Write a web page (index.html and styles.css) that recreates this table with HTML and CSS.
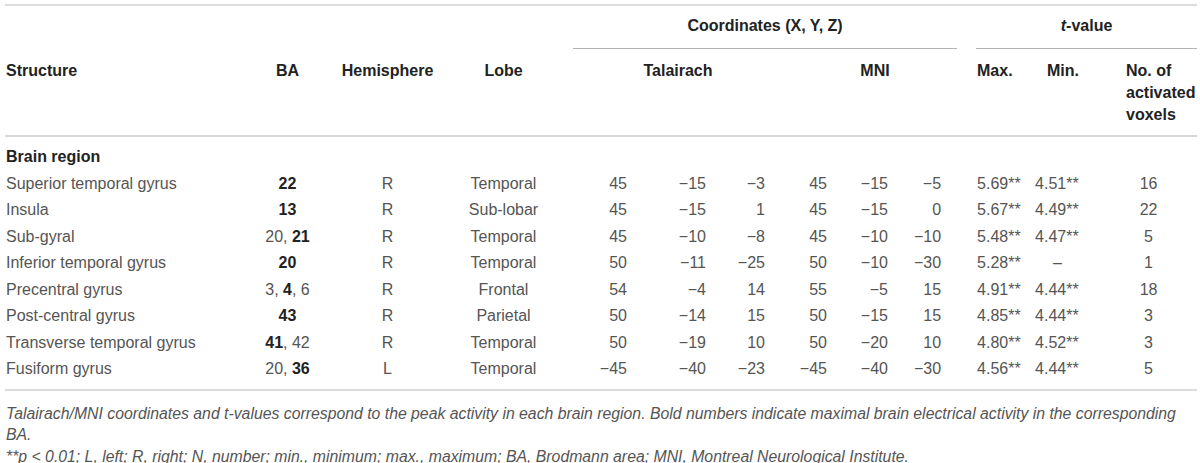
FILE: index.html
```html
<!DOCTYPE html>
<html lang="en">
<head>
<meta charset="utf-8">
<title>Brain regions</title>
<link rel="stylesheet" href="styles.css">
</head>
<body>
<div class="wrap">
<table class="tbl">
  <colgroup>
    <col class="c1"><col class="c2"><col class="c3"><col class="c4">
    <col class="c5"><col class="c6"><col class="c7"><col class="c8"><col class="c9"><col class="c10">
    <col class="c11"><col class="c12"><col class="c13">
  </colgroup>
  <thead>
    <tr class="h1">
      <th></th><th></th><th></th><th></th>
      <th colspan="6" class="grp coord"><div class="grp-in">Coordinates (X, Y, Z)</div></th>
      <th colspan="3" class="grp tval"><div class="grp-in"><i>t</i>-value</div></th>
    </tr>
    <tr class="h2">
      <th class="l">Structure</th>
      <th>BA</th>
      <th>Hemisphere</th>
      <th>Lobe</th>
      <th colspan="3" class="tal">Talairach</th>
      <th colspan="3" class="mni">MNI</th>
      <th class="mx">Max.</th>
      <th class="mn">Min.</th>
      <th class="nv">No. of<br>activated<br>voxels</th>
    </tr>
  </thead>
  <tbody>
    <tr class="sec"><td class="l" colspan="13"><b>Brain region</b></td></tr>
    <tr><td class="l">Superior temporal gyrus</td><td><b>22</b></td><td>R</td><td>Temporal</td><td class="n">45</td><td class="n">−15</td><td class="n">−3</td><td class="n">45</td><td class="n">−15</td><td class="n">−5</td><td class="mx">5.69**</td><td class="mn">4.51**</td><td>16</td></tr>
    <tr><td class="l">Insula</td><td><b>13</b></td><td>R</td><td>Sub-lobar</td><td class="n">45</td><td class="n">−15</td><td class="n">1</td><td class="n">45</td><td class="n">−15</td><td class="n">0</td><td class="mx">5.67**</td><td class="mn">4.49**</td><td>22</td></tr>
    <tr><td class="l">Sub-gyral</td><td>20, <b>21</b></td><td>R</td><td>Temporal</td><td class="n">45</td><td class="n">−10</td><td class="n">−8</td><td class="n">45</td><td class="n">−10</td><td class="n">−10</td><td class="mx">5.48**</td><td class="mn">4.47**</td><td>5</td></tr>
    <tr><td class="l">Inferior temporal gyrus</td><td><b>20</b></td><td>R</td><td>Temporal</td><td class="n">50</td><td class="n">−11</td><td class="n">−25</td><td class="n">50</td><td class="n">−10</td><td class="n">−30</td><td class="mx">5.28**</td><td class="mn dash">–</td><td>1</td></tr>
    <tr><td class="l">Precentral gyrus</td><td>3, <b>4</b>, 6</td><td>R</td><td>Frontal</td><td class="n">54</td><td class="n">−4</td><td class="n">14</td><td class="n">55</td><td class="n">−5</td><td class="n">15</td><td class="mx">4.91**</td><td class="mn">4.44**</td><td>18</td></tr>
    <tr><td class="l">Post-central gyrus</td><td><b>43</b></td><td>R</td><td>Parietal</td><td class="n">50</td><td class="n">−14</td><td class="n">15</td><td class="n">50</td><td class="n">−15</td><td class="n">15</td><td class="mx">4.85**</td><td class="mn">4.44**</td><td>3</td></tr>
    <tr><td class="l">Transverse temporal gyrus</td><td><b>41</b>, 42</td><td>R</td><td>Temporal</td><td class="n">50</td><td class="n">−19</td><td class="n">10</td><td class="n">50</td><td class="n">−20</td><td class="n">10</td><td class="mx">4.80**</td><td class="mn">4.52**</td><td>3</td></tr>
    <tr class="last"><td class="l">Fusiform gyrus</td><td>20, <b>36</b></td><td>L</td><td>Temporal</td><td class="n">−45</td><td class="n">−40</td><td class="n">−23</td><td class="n">−45</td><td class="n">−40</td><td class="n">−30</td><td class="mx">4.56**</td><td class="mn">4.44**</td><td>5</td></tr>
  </tbody>
</table>
<div class="notes">
  <p>Talairach/MNI coordinates and t-values correspond to the peak activity in each brain region. Bold numbers indicate maximal brain electrical activity in the corresponding BA.</p>
  <p>**<span class="p">p</span> &lt; 0.01; L, left; R, right; N, number; min., minimum; max., maximum; BA, Brodmann area; MNI, Montreal Neurological Institute.</p>
</div>
</div>
</body>
</html>
```

FILE: styles.css
```css
html, body {
  margin: 0;
  padding: 0;
  background: #ffffff;
}
.wrap {
  padding: 0 0 0 5px;
  width: 1187px;
  font-family: "Liberation Sans", Arial, sans-serif;
  color: #555555;
}
.tbl {
  border-collapse: collapse;
  table-layout: fixed;
  width: 1187px;
  margin-top: 4px;
  font-size: 16px;
}
.c1 { width: 245px; }
.c2 { width: 75px; }
.c3 { width: 125px; }
.c4 { width: 107px; }
.c5 { width: 78px; }
.c6 { width: 79px; }
.c7 { width: 77px; }
.c8 { width: 44px; }
.c9 { width: 61px; }
.c10 { width: 69px; }
.c11 { width: 70px; }
.c12 { width: 65px; }
.c13 { width: 97px; }

.tbl thead tr.h1 th {
  border-top: 2px solid #dcdcdc;
}
.tbl th {
  font-weight: bold;
  color: #222;
  font-size: 16px;
  line-height: 22px;
  padding: 0;
  text-align: center;
  vertical-align: top;
}
.tbl tr.h1 th { padding-top: 9px; }
.tbl th.grp.coord { padding-left: 16px; padding-right: 8px; }
.tbl th.grp.tval { padding-left: 11px; padding-right: 0; }
.grp-in {
  padding-bottom: 11px;
  border-bottom: 1px solid #b5b5b5;
}
.tbl tr.h2 th {
  padding-top: 11px;
  padding-bottom: 9px;
  border-bottom: 2px solid #d6d6d6;
}
.tbl th.l, .tbl td.l { text-align: left; padding-left: 1px; }
.tbl th.tal { padding-left: 8px; }
.tbl th.mni { padding-right: 6px; }
.tbl th.mx, .tbl td.mx { text-align: left; padding-left: 12px; }
.tbl th.mn { text-align: left; padding-left: 12px; }
.tbl td.mn { text-align: left; padding-left: 0; }
.tbl td.mn.dash { padding-left: 18px; }
.tbl th.nv { text-align: left; padding-left: 26px; }

.tbl td {
  padding: 0;
  line-height: 26.5px;
  text-align: center;
  white-space: nowrap;
  vertical-align: top;
}
.tbl td b { color: #222; }
.tbl tr.sec td { padding-top: 7px; color: #222; }
.tbl tr.last td { padding-bottom: 6px; border-bottom: 2px solid #dcdcdc; }
.tbl td.n { text-align: right; padding-right: 8px; }
.tbl td:nth-child(7).n { padding-right: 26px; }
.tbl td:nth-child(10).n { padding-right: 24px; }

.notes {
  margin-top: 12px;
  font-style: italic;
  font-size: 15.8px;
  line-height: 21.5px;
  color: #555555;
}
.notes p {
  margin: 0;
  padding-left: 1px;
}
```
